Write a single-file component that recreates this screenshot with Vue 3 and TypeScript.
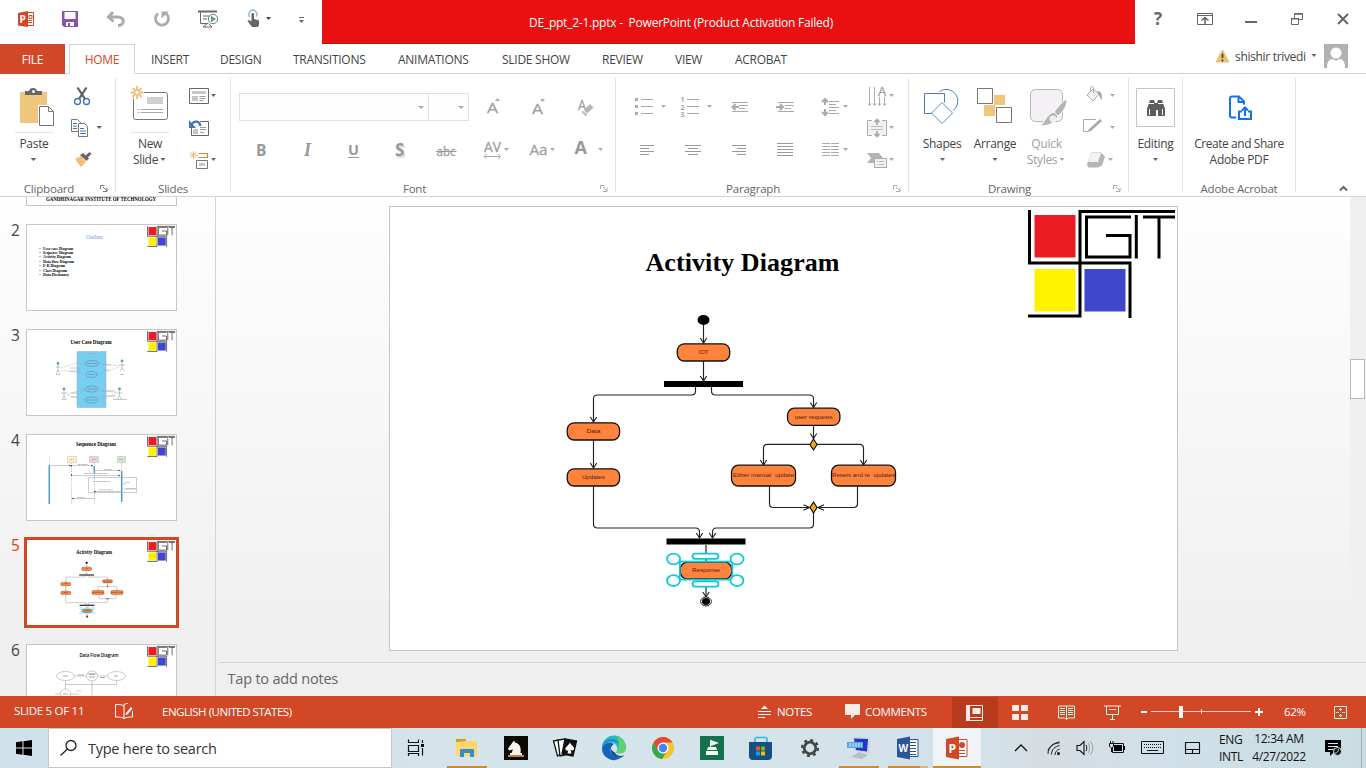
<script setup lang="ts">
import { h, type FunctionalComponent } from 'vue'

// A drawing tile: `b` is the viewBox, and its width and height are also the tile's size.
const Ic: FunctionalComponent<{ b: string }> = (props, { slots }) => {
  const [, , w, ht] = props.b.split(' ')
  return h('svg', { viewBox: props.b, width: w, height: ht, class: 'tile' }, slots.default?.())
}
Ic.props = ['b']

const tabs = [
  { name: 'INSERT', cls: 't-insert' },
  { name: 'DESIGN', cls: 't-design' },
  { name: 'TRANSITIONS', cls: 't-trans' },
  { name: 'ANIMATIONS', cls: 't-anim' },
  { name: 'SLIDE SHOW', cls: 't-show' },
  { name: 'REVIEW', cls: 't-review' },
  { name: 'VIEW', cls: 't-view' },
  { name: 'ACROBAT', cls: 't-acrobat' },
]
const outline = [
  { t: 'User case Diagram', w: 30, y: 250 },
  { t: 'Sequence Diagram', w: 30, y: 254 },
  { t: 'Activity Diagram', w: 28, y: 258 },
  { t: 'Data flow Diagram', w: 31, y: 263 },
  { t: 'E-R Diagram', w: 22, y: 267 },
  { t: 'Class Diagram', w: 24, y: 272 },
  { t: 'Data Dictionary', w: 26, y: 276 },
]
const states = [
  { x: 677.3, y: 343.8, w: 52.4, h: 17.2, t: 'IOT', tw: 10 },
  { x: 787.5, y: 408.2, w: 52.4, h: 17.2, t: 'user requests', tw: 38 },
  { x: 567.2, y: 422.8, w: 52.4, h: 17.2, t: 'Data', tw: 14 },
  { x: 567.2, y: 468.8, w: 52.4, h: 17.2, t: 'Updates', tw: 23 },
  { x: 731.5, y: 465.2, w: 64, h: 20.8, t: 'Either manual  update', tw: 61 },
  { x: 831.5, y: 465.2, w: 64, h: 20.8, t: 'Resets and re  updates', tw: 63 },
  { x: 680.3, y: 562.2, w: 51.4, h: 16.8, t: 'Response', tw: 28 },
]
const arrows = [
  [703.5, 343], [703.5, 381], [593.5, 422], [813.5, 407.5], [593.5, 468], [813.5, 438.5],
  [763.5, 465], [863.5, 465], [699.5, 538], [712.5, 538], [706, 597],
]
</script>

<template>
  <div class="win">
    <header class="titlebar">
      <Ic b="0 0 48 44">
        <path d="M27 12.500h6.500v13H27" fill="#fff" stroke="#d24726" /><path d="M18 13 L28 11 V27 L18 25.500z" fill="#d24726" />
        <path d="M29 15.500h3v3h-3zM28 20.500h4M28 22.500h4" fill="none" stroke="#d24726" /><text x="19.500" y="23" class="pw" font-size="10">P</text>
      </Ic>
      <Ic b="48 0 44 44">
        <path d="M62 11h16v16h-14l-2-2z" fill="#8a52ad" /><path d="M64.500 12h11v7h-11z" fill="#fff" /><path d="M66 22h8v4h-8z" fill="#fff" /><path d="M68 23h2v3h-2z" fill="#8a52ad" />
      </Ic>
      <Ic b="92 0 47 44"><path d="M109 17h9c7 0 7 8.500 0 8.500" fill="none" stroke="#ababab" stroke-width="3" /><path d="M113 12l-4.500 5 5 4.500" fill="none" stroke="#ababab" stroke-width="3" /></Ic>
      <Ic b="139 0 46 44"><path d="M158 13.500a6.500 6.500 0 1 0 8 0" fill="none" stroke="#ababab" stroke-width="2.800" /><path d="M161.500 11.500h7.500l-7.500 7z" fill="#ababab" /></Ic>
      <Ic b="185 0 46 44">
        <path d="M198 11.500h19" stroke="#666" stroke-width="2" /><path d="M200.500 12v11.500h8M203 16h6M203 19h4M207 24l-4 3h9l-3-3" fill="none" stroke="#666" />
        <circle cx="213" cy="19" r="4.700" fill="#fff" stroke="#777" /><path d="M211 15.800l5 3.200-5 3.200z" fill="#4aa57c" />
      </Ic>
      <Ic b="231 0 46 44">
        <path d="M249.800 17a4 4 0 1 1 6.400-.5" fill="none" stroke="#9dbfdf" stroke-width="1.600" />
        <path d="M251.500 14c0-1.500 2.500-1.500 2.500 0v5l5 1.500v4l-1 2.500h-6l-4.500-6c0-1 2-1.500 4 .500z" fill="#666" /><path d="M266 17h5l-2.500 3z" fill="#444" />
      </Ic>
      <Ic b="277 0 45 44"><path d="M299 17.500h5" stroke="#666" /><path d="M299 20h5l-2.500 3z" fill="#666" /></Ic>
      <div class="banner"><span>DE_ppt_2-1.pptx -&nbsp; PowerPoint (Product Activation Failed)</span></div>
      <Ic b="1135 0 47 44"><text x="1154" y="25" font-size="17" font-weight="700" fill="#666" class="ui">?</text></Ic>
      <Ic b="1182 0 46 44"><path d="M1197.500 13.500h15v11h-15zM1198 15.500h14" fill="none" stroke="#666" /><path d="M1205 24v-6M1201.500 20.500l3.500-3 3.500 3" fill="none" stroke="#666" stroke-width="1.600" /></Ic>
      <Ic b="1228 0 46 44"><path d="M1245 22h12" stroke="#666" stroke-width="2" /></Ic>
      <Ic b="1274 0 46 44"><path d="M1291.500 18.500h7v6h-7zM1294.500 18v-4.500h8v6h-3.500" fill="none" stroke="#666" /><path d="M1291 18.700h8M1294 14h9" stroke="#666" stroke-width="1.600" /></Ic>
      <Ic b="1320 0 46 44"><path d="M1338 14l10 10M1348 14l-10 10" stroke="#666" stroke-width="2" /></Ic>
    </header>

    <nav class="tabs">
      <span class="tab file"><b>FILE</b></span>
      <span class="tab home"><b>HOME</b></span>
      <span v-for="t in tabs" :key="t.name" class="tab" :class="t.cls"><b>{{ t.name }}</b></span>
      <div class="user">
        <Ic b="1213 44 20 29"><path d="M1222.500 50l6.500 12h-13z" fill="#ecc071" stroke="#ecc071" stroke-linejoin="round" /><path d="M1222.500 53.500v4.500M1222.500 59.500v2" stroke="#444" stroke-width="1.700" /></Ic>
        <span class="username">shishir trivedi</span>
        <Ic b="1305 44 19 24"><path d="M1311.500 54h5l-2.500 3z" fill="#666" /></Ic>
        <Ic b="1324 44 24 24"><path d="M1324 44h24v24h-24z" fill="#b1b1b1" /><circle cx="1336" cy="53" r="5.500" fill="#fff" /><path d="M1327 68c0-5 1-9 6-9l3 2 3-2c5 0 6 4 6 9z" fill="#fff" /></Ic>
      </div>
    </nav>

    <section class="ribbon">
      <div class="group g-clip">
        <div class="body">
          <div class="big w66">
            <Ic b="0 78 66 58">
              <path d="M20 92h27v31h-27z" fill="#eec77d" /><path d="M25 95v-4h4c0-4 8-4 8 0h5v4z" fill="#666" /><circle cx="33.500" cy="91.500" r="1.500" fill="#fff" />
              <path d="M38 105h12l5 6v16h-17z" fill="#fff" /><path d="M39.500 106.500h9l5 5v14h-14z" fill="#fff" stroke="#777" /><path d="M48.500 106.500v5h5" fill="none" stroke="#777" /><path d="M15 132.500h38" stroke="#e1e1e1" />
            </Ic>
            <span class="paste">Paste</span>
            <Ic b="0 152 66 16"><path d="M30.500 158h6l-3 3z" fill="#666" /></Ic>
          </div>
          <div class="stack">
            <Ic b="66 78 49 32"><path d="M77.500 87.500l7.500 11.500M86.500 87.500l-7.500 11.500" stroke="#5e5e5e" stroke-width="2.200" /><circle cx="77.500" cy="101.500" r="3" fill="none" stroke="#3f74b5" stroke-width="1.300" /><circle cx="86.500" cy="101.500" r="3" fill="none" stroke="#3f74b5" stroke-width="1.300" /></Ic>
            <Ic b="66 110 49 34">
              <path d="M71.500 119.500h6l3 3v9h-9z" fill="#fff" stroke="#777" /><path d="M78.500 123.500h6l3 3v10h-9z" fill="#fff" stroke="#777" /><path d="M73 123.500h4M73 126h4M73 128.500h4M80 128.500h4M80 131h6M80 133.500h6" stroke="#3f74b5" /><path d="M96.500 126h5.500l-2.750 3z" fill="#666" />
            </Ic>
            <Ic b="66 144 49 36"><path d="M75 159l6-3 5 6-5 5z" fill="#eec077" /><path d="M80 155l6.500 6 2.500-2.500-6-5.500z" fill="#666" /><path d="M85.500 157.500l5-4.500" stroke="#666" stroke-width="3" /></Ic>
          </div>
        </div>
        <div class="label"><span>Clipboard</span><Ic b="99 182 16 12"><path d="M100.500 189v-3.500h4M103 187l4 4M107 187.500v4h-4" fill="none" stroke="#777" /></Ic></div>
      </div>

      <div class="group g-slides">
        <div class="body">
          <div class="big w68">
            <Ic b="116 78 68 58">
              <rect x="133.500" y="92.500" width="34" height="27" rx="2" fill="#fff" stroke="#777" /><path d="M147 97h16v7h-16z" fill="#cfcfcf" /><path d="M141 109.500h22M141 112.500h22" stroke="#aaa" /><path d="M138 109.500h1.500M138 112.500h1.500" stroke="#999" />
              <path d="M130 86h14v14h-10z" fill="#fff" /><path d="M137 86v13M130.500 92.500h13M132.500 88l9 9M141.500 88l-9 9" stroke="#ecbf74" stroke-width="1.800" /><circle cx="137" cy="92.500" r="2.200" fill="#fff" stroke="#ecbf74" /><path d="M131 132.500h38" stroke="#e1e1e1" />
            </Ic>
            <span>New</span><span class="row">Slide<Ic b="159 152 9 16"><path d="M161.500 158h5l-2.500 3z" fill="#666" /></Ic></span>
          </div>
          <div class="stack">
            <Ic b="184 78 46 34"><path d="M189.500 88.500h19v15h-19z" fill="#fff" stroke="#666" /><path d="M192 91h14v3h-14zM192 96h6v5h-6z" fill="#c7c7c7" /><path d="M199.500 96.500h6M199.500 98.500h6M199.500 100.500h4" stroke="#999" /><path d="M211 94h5l-2.500 3z" fill="#666" /></Ic>
            <Ic b="184 112 46 32"><path d="M191.500 121.500h17v14h-17z" fill="#fff" stroke="#666" /><path d="M193 129h5v5h-5z" fill="#c7c7c7" /><path d="M200 127.500h6M200 129.500h6M200 132.500h4" stroke="#999" /><path d="M188 119h12v8h-12z" fill="#fff" /><path d="M200.500 126c-1-5-6-6-9-1.500" fill="none" stroke="#3f74b5" stroke-width="2.200" /><path d="M189 120v8h7z" fill="#3f74b5" /></Ic>
            <Ic b="184 144 46 36"><path d="M199 153.500h8.500v4h-9" fill="none" stroke="#d9843d" stroke-width="1.200" /><path d="M196.500 160.500h11v8h-11z" fill="#fff" stroke="#777" /><path d="M199 163h6v3h-6z" fill="#c7c7c7" /><path d="M193.500 151v8M189.500 155h8M190.700 152.200l5.600 5.600M196.300 152.200l-5.600 5.600" stroke="#ecbf74" /><path d="M211 158h5l-2.500 3z" fill="#666" /></Ic>
          </div>
        </div>
        <div class="label"><span>Slides</span></div>
      </div>

      <div class="group g-font">
        <div class="rows">
          <div class="frow top">
            <div class="combo wide"><i class="caret"></i></div><div class="combo"><i class="caret"></i></div>
            <Ic b="469 93 46 28"><text x="487" y="113" class="gl" font-size="15" textLength="11" lengthAdjust="spacingAndGlyphs">A</text><path d="M495 101h5l-2.500-3z" fill="#aaa" /></Ic>
            <Ic b="515 93 46 28"><text x="532" y="114" class="gl" font-size="15" textLength="11" lengthAdjust="spacingAndGlyphs">A</text><path d="M540 99h5l-2.500 3z" fill="#aaa" /></Ic>
            <Ic b="561 93 54 28"><text x="578" y="110" class="gl" font-size="14" textLength="8" lengthAdjust="spacingAndGlyphs">A</text><path d="M584 110l6-6 3.500 3.500-6.500 6z" fill="#b8b5b8" /><path d="M582.500 111.500l4 4" stroke="#b8b5b8" stroke-width="2" /></Ic>
          </div>
          <div class="frow">
            <Ic b="239 132 44 40"><text x="256" y="156" class="gl b" font-size="15.500">B</text></Ic>
            <Ic b="283 132 46 40"><text x="304" y="156" class="gl b serif" font-size="18">I</text></Ic>
            <Ic b="329 132 46 40"><text x="348" y="155" class="gl b" font-size="14.500">U</text><path d="M348 157.500h11" stroke="#999" /></Ic>
            <Ic b="375 132 46 40"><text x="396" y="158" font-size="18" font-weight="700" class="ui" fill="#ddd">S</text><text x="395" y="156" class="gl b" font-size="17">S</text></Ic>
            <Ic b="421 132 46 40"><text x="436.500" y="156" class="gl" font-size="13" textLength="19" lengthAdjust="spacingAndGlyphs">abc</text><path d="M436 151.500h20.500" stroke="#999" /></Ic>
            <Ic b="467 132 48 40"><text x="484" y="152" class="gl" font-size="14" textLength="17" lengthAdjust="spacingAndGlyphs">AV</text><path d="M484 156.500h16M486.500 154l-2.500 2.500 2.500 2.500M498 154l2.500 2.500-2.500 2.500" fill="none" stroke="#aaa" /><path d="M504 148h5l-2.500 3z" fill="#aaa" /></Ic>
            <Ic b="515 132 46 40"><text x="529.500" y="155" class="gl" font-size="14" textLength="18" lengthAdjust="spacingAndGlyphs">Aa</text><path d="M550 148h5l-2.500 3z" fill="#aaa" /></Ic>
            <Ic b="561 132 54 40"><text x="574.500" y="154" class="gl b" font-size="17" textLength="12.500" lengthAdjust="spacingAndGlyphs">A</text><path d="M598 148h5l-2.500 3z" fill="#aaa" /></Ic>
          </div>
        </div>
        <div class="label"><span>Font</span><Ic b="599 182 16 12"><path d="M600.500 189v-3.500h4M603 187l4 4M607 187.500v4h-4" fill="none" stroke="#aaa" /></Ic></div>
      </div>

      <div class="group g-para">
        <div class="body">
          <div class="rows">
            <div class="frow p1">
              <Ic b="630 86 46 42"><path d="M641 99.500h12M641 106.500h12M641 113.500h12" stroke="#aaa" /><path d="M635 99.500h3M635 106.500h3M635 113.500h3" stroke="#aaa" stroke-width="3" /><path d="M661 105h5l-2.500 3z" fill="#aaa" /></Ic>
              <Ic b="676 86 46 42"><path d="M687 99.500h12M687 106.500h12M687 113.500h12" stroke="#aaa" /><text x="680.500" y="102" class="num">1</text><text x="680.500" y="109.500" class="num">2</text><text x="680.500" y="116.500" class="num">3</text><path d="M707 105h5l-2.500 3z" fill="#aaa" /></Ic>
              <Ic b="722 86 46 42"><path d="M732 102.500h16M739 105.500h9M739 108.500h6M732 111.500h16" stroke="#aaa" /><path d="M739 107h-6M735.500 104l-3 3 3 3" fill="none" stroke="#aaa" stroke-width="2" /></Ic>
              <Ic b="768 86 46 42"><path d="M778 102.500h16M785 105.500h9M785 108.500h6M778 111.500h16" stroke="#aaa" /><path d="M776 107h6M780 104l3 3-3 3" fill="none" stroke="#aaa" stroke-width="2" /></Ic>
              <Ic b="814 86 46 42"><path d="M829 101.500h10M829 104.500h7M829 107.500h10M829 110.500h7M829 113.500h10" stroke="#aaa" /><path d="M825 99v6M822 102l3-3 3 3M825 109v6M822 112l3 3 3-3" fill="none" stroke="#aaa" stroke-width="2" /><path d="M843 105h5l-2.500 3z" fill="#aaa" /></Ic>
            </div>
            <div class="frow p2">
              <Ic b="630 132 46 40"><path d="M640 145.500h14M640 148.500h9M640 151.500h14M640 154.500h9" stroke="#999" /></Ic>
              <Ic b="676 132 46 40"><path d="M685 145.500h16M688 148.500h10M685 151.500h16M688 154.500h10" stroke="#999" /></Ic>
              <Ic b="722 132 46 40"><path d="M732 145.500h14M737 148.500h9M732 151.500h14M737 154.500h9" stroke="#999" /></Ic>
              <Ic b="768 132 46 40"><path d="M777 143.500h16M777 146.500h16M777 149.500h16M777 152.500h16M777 155.500h16" stroke="#999" /></Ic>
              <Ic b="814 132 46 40"><path d="M822 143.500h8M822 146.500h8M822 149.500h8M822 152.500h8M822 155.500h8M831 143.500h8M831 146.500h8M831 149.500h8M831 152.500h8M831 155.500h8" stroke="#aaa" /><path d="M843 148h5l-2.500 3z" fill="#aaa" /></Ic>
            </div>
          </div>
          <div class="stack">
            <Ic b="860 78 48 32"><path d="M869.500 87v18M874.500 87v18M879.500 97v8M884.500 97v8M868 103.500l1.500 2 1.500-2M873 103.500l1.500 2 1.500-2M878 103.500l1.500 2 1.500-2M883 103.500l1.500 2 1.500-2" fill="none" stroke="#aaa" /><text x="878" y="96" class="gl" font-size="13">A</text><path d="M889 94h5l-2.500 3z" fill="#aaa" /></Ic>
            <Ic b="860 110 48 34"><path d="M868 121h18v14h-18z" fill="#f5f0f7" /><path d="M872 120.500h-4.500v15h4.500M882 120.500h4.500v15h-4.500" fill="none" stroke="#aaa" /><path d="M871 126.500h12M871 129.500h12" stroke="#bbb" /><path d="M877 120v5M874.500 122l2.500-2.500 2.500 2.500M877 131v5M874.500 134l2.500 2.500 2.500-2.500" fill="none" stroke="#aaa" stroke-width="1.800" /><path d="M889 126h5l-2.500 3z" fill="#aaa" /></Ic>
            <Ic b="860 144 48 36"><path d="M867 153h12l4 5h-9v5h-7l4-5z" fill="#b5b5b5" /><path d="M874.500 158.500h12v9h-12z" fill="#f5f0f7" stroke="#aaa" /><path d="M877 161.500h1M879 161.500h5M877 164.500h1M879 164.500h5" stroke="#bbb" /><path d="M889 158h5l-2.500 3z" fill="#aaa" /></Ic>
          </div>
        </div>
        <div class="label"><span>Paragraph</span><Ic b="892 182 16 12"><path d="M893.500 189v-3.500h4M896 187l4 4M900 187.500v4h-4" fill="none" stroke="#aaa" /></Ic></div>
      </div>

      <div class="group g-draw">
        <div class="body">
          <div class="big w66"><Ic b="909 78 66 58"><path d="M939.500 91.500a11.500 11.500 0 1 1 13.500 19" fill="none" stroke="#4a7fb8" /><path d="M934 113.500h-9.500v-20h20v9" fill="none" stroke="#4a7fb8" /><path d="M942 102.500l10.500 10.500-10.500 10.500-10.500-10.500z" fill="#fff" stroke="#5c8fc5" /></Ic><span>Shapes</span><Ic b="909 152 66 16"><path d="M940 158h5l-2.500 3z" fill="#666" /></Ic></div>
          <div class="big w40"><Ic b="975 78 40 58"><path d="M994 95h11v10h-11zM984 105h11v11h-11z" fill="#eec77d" /><path d="M977.500 88.500h15v15h-15zM996.500 107.500h15v15h-15z" fill="#fff" stroke="#777" /></Ic><span>Arrange</span><Ic b="975 152 40 16"><path d="M992.500 158h5l-2.500 3z" fill="#666" /></Ic></div>
          <div class="big w66 dim"><Ic b="1015 78 66 58"><rect x="1030.500" y="89.500" width="32" height="32" rx="5" fill="#f4f0f6" stroke="#b8b5b8" /><path d="M1067 99c-5 2-9 8-13 13l4 4c5-4 9-9 9-17z" fill="#b5b5b5" stroke="#fff" /><path d="M1054 112l4 4c-3 7-9 10-18 10 5-3 6-12 14-14z" fill="#b5b5b5" stroke="#fff" /><circle cx="1053" cy="119" r="3.500" fill="#eee" /></Ic><span class="quick">Quick</span><span class="row quick">Styles<Ic b="1058 152 9 16"><path d="M1060.500 158h5l-2.500 3z" fill="#aaa" /></Ic></span></div>
          <div class="stack">
            <Ic b="1081 78 47 34"><path d="M1087 95l6-6 6 5-6 7z" fill="#f4f0f6" stroke="#aaa" /><path d="M1090.500 92v-4c0-2 3-2 3 0v5" fill="none" stroke="#aaa" /><path d="M1097 91c5 0 5 3 5 9-3-3-3-5-5-9z" fill="#aaa" /><path d="M1110 94h5l-2.500 3z" fill="#aaa" /></Ic>
            <Ic b="1081 112 47 32"><path d="M1096 119.500h-12.500v12h4" fill="none" stroke="#aaa" /><path d="M1089 129l11-10 2 2-11 10-4 1z" fill="#aaa" /><path d="M1110 126h5l-2.500 3z" fill="#aaa" /></Ic>
            <Ic b="1081 144 47 36"><path d="M1091 152.500h10l4 4-3 9-4 2h-10l-1-3z" fill="#b5b5b5" /><path d="M1091 153h10l-3 9h-10z" fill="#f4f0f6" /><path d="M1108 158h5l-2.500 3z" fill="#aaa" /></Ic>
          </div>
        </div>
        <div class="label"><span>Drawing</span><Ic b="1112 182 16 12"><path d="M1113.500 189v-3.500h4M1116 187l4 4M1120 187.500v4h-4" fill="none" stroke="#aaa" /></Ic></div>
      </div>

      <div class="group g-edit">
        <div class="big"><Ic b="1129 78 53 58"><path d="M1136.500 88.500h38v38h-38z" fill="#fff" stroke="#c6c6c6" /><path d="M1147 116v-7l2-6 1-3h4l1 3h2l1-3h4l1 3 2 6v7h-7v-6h-2v6z" fill="#5e5e5e" /><path d="M1149 103.500h5M1158 103.500h5M1149.500 109v6M1162.500 109v6" stroke="#fff" /></Ic><span>Editing</span><Ic b="1129 152 53 16"><path d="M1153 158h5l-2.500 3z" fill="#666" /></Ic></div>
      </div>
      <div class="group g-adobe">
        <div class="body"><div class="big"><Ic b="1183 78 112 58"><path d="M1236 117.500h-4c-1.500 0-2-.500-2-2v-17c0-1.500.5-2 2-2h7l5 5v3M1238.500 97v5h6" fill="none" stroke="#1473e6" stroke-width="2" /><path d="M1242 111.500h-3v7.500h12v-7.500h-3M1245 116v-8M1242 110.500l3-3 3 3" fill="none" stroke="#1473e6" stroke-width="2" /></Ic><span class="create">Create and Share</span><span>Adobe PDF</span></div></div>
        <div class="label"><span>Adobe Acrobat</span></div>
      </div>
      <Ic b="1296 74 70 122"><path d="M1340 190.500l3.500-3.500 3.500 3.500" fill="none" stroke="#666" stroke-width="2" /></Ic>
    </section>

    <main class="work">
      <aside class="side">
        <div class="slot"><span class="no"></span><div class="thumb"><Ic b="27 120 149 85"><text x="46" y="201.300" class="tt" font-size="5.500" textLength="110" lengthAdjust="spacingAndGlyphs">GANDHINAGAR INSTITUTE OF TECHNOLOGY</text></Ic></div></div>
        <div class="slot"><span class="no">2</span><div class="thumb"><Ic b="27 225 149 85">
          <use href="#git" transform="translate(26.500 225.500) scale(.1893 .192) translate(-390 -207)" />
          <text x="86" y="239" font-size="6" fill="#7ba0dd" class="serif" textLength="17">Outline</text>
          <g v-for="o in outline" :key="o.t"><circle cx="40" :cy="o.y - 1.400" r=".7" fill="#4a86c5" /><text x="43" :y="o.y" class="tt" font-size="3.900" :textLength="o.w" lengthAdjust="spacingAndGlyphs">{{ o.t }}</text></g>
        </Ic></div></div>
        <div class="slot"><span class="no">3</span><div class="thumb"><Ic b="27 330 149 85">
          <use href="#git" transform="translate(26.500 330.500) scale(.1893 .192) translate(-390 -207)" />
          <text x="70.500" y="343.600" class="tt" font-size="5.200" textLength="41" lengthAdjust="spacingAndGlyphs">User Case Diagram</text>
          <path d="M77 351.500h29v56h-29z" fill="#76cef3" stroke="#9ab" stroke-width=".5" />
          <g fill="none" stroke="#678" stroke-width=".5"><ellipse cx="92" cy="363.500" rx="7" ry="3" /><ellipse cx="91.500" cy="374.500" rx="5.500" ry="3" /><ellipse cx="91.500" cy="389" rx="6.500" ry="3" /><ellipse cx="91.500" cy="400" rx="6.500" ry="3" /><path d="M87 363.500h10M88 374.500h7M87 389h9M87 400h9" /><path d="M61 368l16-5h8M61 370l25 4M98 363l21 3M97 375l22-8M67 394l18-5M67 395l18 5M98 389l19 4M98 400l18-6" stroke="#aaa" stroke-dasharray="2 .7" /></g>
          <g stroke="#aaa" stroke-width=".7" fill="none"><path d="M58 365v5l-2 4M58 370l2 4M56 367h4M122 363v5l-2 3M122 368l2 3M119 365h6M64 391v5l-2 3M64 396l2 3M61 393h6M119.500 391v5l-2 3M119.500 396l2 3M117 393h5M87 353.500h8M56 374.500h4M120 374.500h4M62 399.500h4M113 399.500h14M70 368h10M70 371h11M103 365h8M104 370h5M101 391h14M101 396h14M71 393h6M71 397h6" /></g>
          <g fill="#4aa5c9"><circle cx="58" cy="363.500" r="1.400" /><circle cx="122" cy="361" r="1.400" /><circle cx="64" cy="389" r="1.400" /><circle cx="119.500" cy="389" r="1.400" /></g>
        </Ic></div></div>
        <div class="slot"><span class="no">4</span><div class="thumb"><Ic b="27 435 149 85">
          <use href="#git" transform="translate(26.500 435.500) scale(.1893 .192) translate(-390 -207)" />
          <text x="76" y="446.300" class="tt" font-size="5.200" textLength="40" lengthAdjust="spacingAndGlyphs">Sequence Diagram</text>
          <path d="M67.500 456.500h9v6h-9z" fill="#fff0c8" stroke="#bbb" stroke-width=".5" /><path d="M89.500 456.500h9v6h-9z" fill="#ead0e3" stroke="#bbb" stroke-width=".5" /><path d="M117.500 456.500h8v6h-8z" fill="#d0e7cf" stroke="#bbb" stroke-width=".5" />
          <path d="M71.500 463v41M94.500 463v41M121.500 463v41M49.500 457v10" stroke="#aaa" stroke-width=".6" stroke-dasharray="1.500 1" /><path d="M49.300 465.500V504M121.700 471v31M94.300 466v7" stroke="#519ac2" stroke-width="1.500" />
          <path d="M50 465.500h43M95 470.500h26M72 475.500h48M88.500 477.500h48v15h-48zM94 491.500h27M72 498.500h23M122 484h4M123 489h13" fill="none" stroke="#aaa" stroke-width=".6" />
          <path d="M69.500 464.500l1.500 1-1.500 1M91.500 464.500l1.500 1-1.500 1M118.500 469.500l1.500 1-1.500 1M118.500 474.500l1.500 1-1.500 1M95.500 490.500l-1.500 1 1.500 1M73.500 497.500l-1.500 1 1.500 1" fill="#222" /><path d="M78 464.500h10M84 473.500h24M93 481.500h17M99 489.800h14M77 497.500h8M104 469.500h8M126 488.500h10M125 482.500h5M70 459.500h4M92 459.500h4M119 459.500h4" stroke="#aaa" stroke-width=".8" stroke-dasharray="2 .5" /><path d="M71.500 465v2M71.500 474v2" stroke="#2a80a8" />
        </Ic></div></div>
        <div class="slot"><span class="no sel">5</span><div class="thumb sel"><Ic b="27 540 149 85">
          <use href="#git" transform="translate(26.500 540.500) scale(.1893 .192) translate(-390 -207)" />
          <text x="76" y="553.600" class="tt" font-size="5.200" textLength="36" lengthAdjust="spacingAndGlyphs">Activity Diagram</text>
          <use href="#flow" transform="translate(27.300 541) scale(.1893 .192) translate(-390 -207)" />
        </Ic></div></div>
        <div class="slot"><span class="no">6</span><div class="thumb"><Ic b="27 645 149 85">
          <use href="#git" transform="translate(26.500 645.500) scale(.1893 .192) translate(-390 -207)" />
          <text x="79.500" y="657.300" class="tt sans" font-size="5" textLength="39" lengthAdjust="spacingAndGlyphs">Data Flow Diagram</text>
          <g fill="none" stroke="#aaa" stroke-width=".6"><ellipse cx="65.500" cy="676" rx="9" ry="4.500" /><ellipse cx="92" cy="676" rx="5.500" ry="5" /><ellipse cx="116.500" cy="676" rx="9" ry="4.500" /><ellipse cx="65.500" cy="694" rx="5" ry="5" /><path d="M75 676h12M98 676h9M65.500 681v8M65.500 684.500h51v-4M92 681v16M87 673.500h10M55 694h6M70 694h9M76 691h5" /><path d="M63 676h5M89 674.500h6M89 677h6M114 676h4M63 694h5M78 675h6M100 677.500h5" stroke-width="1" /></g>
        </Ic></div></div>
      </aside>

      <section class="right">
        <div class="stage">
          <div class="slide">
            <Ic b="390 207 787 443">
              <defs>
                <g id="git">
                  <path d="M1034.500 215h41v42.500h-41z" fill="#ed1c24" /><path d="M1034.500 269h41v42.500h-41z" fill="#fff200" /><path d="M1084.500 269h41v42.500h-41z" fill="#3f48cc" />
                  <path d="M1029.500 210v53h100.500v55M1028 316h52V211.500h95M1131 217h-44.500v40H1130v-21.500h-24M1136.300 215v43.500M1143 217h32M1159 217v41.500" fill="none" stroke="#000" stroke-width="3" />
                </g>
                <g id="flow">
                  <g fill="none" stroke="#222" stroke-width="1.150">
                    <path d="M703.500 325v18M703.500 361v20M695.500 387v4q0 4-4 4h-94q-4 0-4 4v23M711.500 387v4q0 4 4 4h94q4 0 4 4v9M593.500 440v28M813.500 425v14M810 444.300h-42.500q-4 0-4 4v17M817 444.300h42.500q4 0 4 4v17M769.500 486v17.500q0 4 4 4h36.500M857.500 486v17.500q0 4-4 4h-36.500M593.500 486v38q0 4 4 4h98q4 0 4 4v6M813.500 512v12q0 4-4 4h-93q-4 0-4 4v6M706 545v17M706 579v18" />
                    <path v-for="(a, i) in arrows" :key="i" :d="`M${a[0] - 3.2} ${a[1] - 5}L${a[0]} ${a[1]}L${a[0] + 3.2} ${a[1] - 5}`" />
                    <path d="M803.500 504.700l6 2.800-6 2.800M824 504.700l-6 2.800 6 2.800" />
                  </g>
                  <ellipse cx="703.500" cy="320" rx="6" ry="5" /><path d="M664 381h79v6h-79zM666.500 538.500h79v6h-79z" />
                  <g v-for="s in states" :key="s.t">
                    <rect :x="s.x" :y="s.y" :width="s.w" :height="s.h" rx="7" fill="#ff823d" stroke="#111" stroke-width="1.300" />
                    <text :x="s.x + s.w / 2 - s.tw / 2" :y="s.y + s.h / 2 + 1.800" :textLength="s.tw" lengthAdjust="spacingAndGlyphs" class="node">{{ s.t }}</text>
                  </g>
                  <path d="M813.500 439l3.500 5.500-3.500 5.500-3.500-5.500zM813.500 502l3.500 5.500-3.500 5.500-3.500-5.500z" fill="#fda50f" stroke="#111" stroke-width="1.200" />
                  <g stroke="#0bcbd6" stroke-width="1.800" fill="#fff">
                    <rect x="679.800" y="561.600" width="52.500" height="18" fill="none" />
                    <rect x="692.500" y="553.700" width="26" height="5.200" rx="2.600" /><rect x="692.500" y="581.400" width="26" height="5.200" rx="2.600" />
                    <ellipse cx="673.500" cy="559" rx="6.500" ry="5.400" /><ellipse cx="737" cy="559" rx="6.500" ry="5.400" /><ellipse cx="673.500" cy="580.600" rx="6.500" ry="5.400" /><ellipse cx="737" cy="580.600" rx="6.500" ry="5.400" />
                  </g>
                  <ellipse cx="706" cy="601.500" rx="5.400" ry="4.500" fill="#fff" stroke="#222" /><ellipse cx="706" cy="601.500" rx="4" ry="3.400" />
                </g>
              </defs>
              <use href="#git" /><use href="#flow" />
              <text x="645.500" y="270.500" class="tt" font-size="26" textLength="194">Activity Diagram</text>
            </Ic>
          </div>
          <div class="scroll"><div class="grip"></div></div>
        </div>
        <div class="notes"><span>Tap to add notes</span></div>
      </section>
    </main>

    <footer class="status">
      <span class="s1">SLIDE 5 OF 11</span>
      <Ic b="108 696 54 32"><path d="M124 706c-2-1.500-5-1.500-8.500-1.500v12.500c3.500 0 6.500 0 8.500 1.500v-14c1-.5 2-1 4-1M132.500 711v6c-3 0-6 0-8.500 1.500" fill="none" stroke="#fff" /><path d="M126 713l5-6 1.500 1.500-5 6-2 .5z" fill="#fff" /></Ic>
      <span class="s2">ENGLISH (UNITED STATES)</span>
      <Ic b="750 696 27 32"><path d="M758 711.500h13M758 714.500h13M758 717.500h7" stroke="#fff" /><path d="M761 709h7l-3.500-3.500z" fill="#fff" /></Ic>
      <span class="s3">NOTES</span>
      <Ic b="830 696 35 32"><path d="M845 704h15v11h-5l-4 4v-4h-6z" fill="#fbeae5" /></Ic>
      <span class="s4">COMMENTS</span>
      <Ic b="952 696 46 32"><path d="M952 697h46v31h-46z" fill="#b83b1d" /><path d="M966.500 705.500h16v15h-16z" fill="none" stroke="#fbeae5" /><path d="M966 705h4v16h-4zM972.500 708h8v6h-8zM970 717h12v1h-12z" fill="#fbeae5" /></Ic>
      <Ic b="998 696 46 32"><path d="M1012 705h7v6h-7zM1021 705h7v6h-7zM1012 714h7v6h-7zM1021 714h7v6h-7z" fill="#fbeae5" /></Ic>
      <Ic b="1044 696 46 32"><path d="M1066.500 719v-13h-8v12h6l2 1.500 2-1.500h6v-12h-8" fill="none" stroke="#fbeae5" /><path d="M1060 708.500h5M1060 710.500h5M1060 712.500h5M1060 714.500h5M1068 708.500h5M1068 710.500h5M1068 712.500h5M1068 714.500h5" stroke="#fbeae5" /></Ic>
      <Ic b="1090 696 50 32"><path d="M1104 706h17M1106.500 706v8.500h12v-8.500M1109 709.500h7M1112.500 715v4M1110 719.500h5" fill="none" stroke="#fbeae5" /></Ic>
      <Ic b="1140 696 132 32"><path d="M1141 712h6M1255 712h8M1259 708v8" stroke="#fff" stroke-width="2" /><path d="M1151 711.500h100M1201.500 709v5" stroke="#f6cfc4" /><path d="M1179 706h4v12h-4z" fill="#fff" /></Ic>
      <span class="s5">62%</span>
      <Ic b="1320 696 46 32"><path d="M1334.500 706.500h12v12h-12z" fill="none" stroke="#fbeae5" /><path d="M1340.500 708v3M1340.500 714v3M1336 712.500h3M1342 712.500h3M1339 709.500h3M1339 715.500h3" stroke="#fbeae5" stroke-dasharray="1.500 .5" /></Ic>
    </footer>

    <footer class="taskbar">
      <Ic b="0 728 48 40"><path d="M16 742.300l6.500-1v6.200H16zM23.500 741.200l8.500-1.200v7.500h-8.500zM16 748.500h6.500v6.200l-6.500-1zM23.500 748.500H32v7.500l-8.500-1.200z" /></Ic>
      <div class="search"><Ic b="48 728 40 40"><circle cx="71" cy="745.500" r="5" fill="none" stroke="#222" stroke-width="1.300" /><path d="M67.500 749l-7 6.500" stroke="#222" stroke-width="1.300" /></Ic><span>Type here to search</span></div>
      <Ic b="392 728 50 40"><path d="M408.500 739.500v3h10v-3M408.500 745.500h10v6h-10zM408.500 756v-2.500h10v2.500M422.500 740v3M422.500 748v7.500" fill="none" stroke="#111" stroke-width="1.200" /><path d="M421 744h3v3h-3z" /></Ic>
      <Ic b="442 728 49 40"><path d="M456 739h10v4h-10z" fill="#d79b20" /><path d="M456 742l10-1h11v15h-21z" fill="#ffd66b" /><path d="M460 757v-7c0-1 1-1 2-1h10c1 0 2 0 2 1v7h-4v-4h-6v4z" fill="#338bd0" /><path d="M447 766h40v2h-40z" fill="#ce8a2d" /></Ic>
      <Ic b="491 728 49 40"><path d="M504 736h24v24h-24z" fill="#0c0906" /><path d="M508 757h16v-2h-16z" fill="#b38652" /><path d="M510 755v-2h12v2zM511.500 753h9c1-5-1-10-5.500-10.500l-1-2-1.500 2-4.500 6 1 2 4-1z" fill="#f8f3ea" /></Ic>
      <Ic b="540 728 49 40"><g fill="#fff" stroke="#111" stroke-width="1.300"><path d="M553.500 741l5-1 2 14-3 2z" /><path d="M558 740l7-1v16l-5 1z" /><path d="M565 739l11.500 2-3.500 15-11-2z" fill="#111" /></g><path d="M570 742.500c-2 4-5 4-4.500 7 1 2 3 1 3 0l-1 4h4l-1-3.500c2 1 4 0 3.500-2-.5-2-3-3-4-5.500z" fill="#fff" /></Ic>
      <Ic b="589 728 49 40">
        <path d="M602 748a12 12 0 0 0 20 9c-8 2-13-4-11-9 1-3 3-4 3-4-5-4-11-1-12 4z" fill="#1264b7" /><path d="M602 747a12 12 0 0 1 24 1c0 5-6 6.500-10 4.500 3-3 1-9-4-10-4-.5-8 1.500-10 4.500z" fill="#2bb9c0" /><path d="M617 736.500a12 12 0 0 1 9 11.500c0 5-6 6.500-10 4.500 4-4 4-10 1-16z" fill="#5fd46a" /><path d="M602 747c1-8 12-12 17-4-6-2-13-3-17 4z" fill="#1b8bdc" /><path d="M611 749c-1 5 3 9 8 8.500 2 0 4-.5 5-2-4 1-8 0-9-3-2-1-3-2-4-3.500z" fill="#1a4d96" />
      </Ic>
      <Ic b="638 728 49 40"><circle cx="663" cy="748" r="11" fill="#fbc22b" /><path d="M653.500 742.500a11 11 0 0 1 19 0H663l-5 9z" fill="#e3483d" /><path d="M653.500 742.500a11 11 0 0 0 8.500 16.500l5-8-9 0z" fill="#35a853" /><circle cx="663" cy="748" r="5.500" fill="#fff" /><circle cx="663" cy="748" r="4.200" fill="#4285f4" /></Ic>
      <Ic b="687 728 49 40"><path d="M700 736h24v24h-24z" fill="#15704d" /><path d="M706 751h12v4h-12zM711 740v10h-1v-10zM711 740l8 3-8 3zM708 747h8l1 3h-10z" fill="#eefaf3" /></Ic>
      <Ic b="736 728 49 40"><path d="M755 742v-3c0-1 .5-1.500 1.500-1.500h9c1 0 1.500.500 1.500 1.500v3" fill="none" stroke="#35b7e7" stroke-width="1.700" /><path d="M749 742h23v14q0 4-4 4h-15q-4 0-4-4z" fill="#164f87" /><path d="M756 746.500h4v4h-4z" fill="#f25022" /><path d="M761 746.500h4v4h-4z" fill="#7fba00" /><path d="M756 751.500h4v4h-4z" fill="#00a4ef" /><path d="M761 751.500h4v4h-4z" fill="#ffb900" /></Ic>
      <Ic b="785 728 49 40"><circle cx="810" cy="748" r="5.800" fill="none" stroke="#444" stroke-width="2.800" /><circle cx="810" cy="748" r="8" fill="none" stroke="#444" stroke-width="2.200" stroke-dasharray="3 3.280" /></Ic>
      <Ic b="834 728 49 40"><path d="M852 737l18 .5-1 16-14-2z" fill="#cfd5df" /><path d="M854 738.500l14 .5-1 12.500-11-1.500z" fill="#1e39c8" /><path d="M847 742h16v6h-16z" fill="#57a5df" /><path d="M849 744h13M849 746h13" stroke="#eaf5fd" stroke-dasharray="2 1" /><path d="M851 757l8-5 9 3-6 4z" fill="#b9bec4" /><path d="M839 766h40v2h-40z" fill="#ce8a2d" /></Ic>
      <Ic b="883 728 50 40"><path d="M907 739.500h11v17h-11z" fill="#fff" stroke="#2b579a" /><path d="M910 742.500h6M910 745.500h6M910 748.500h6M910 751.500h6M910 754.500h6" stroke="#2b579a" /><path d="M897 739l13-2.500v23L897 757z" fill="#2b579a" /><text x="898.500" y="752" class="pw" font-size="10">W</text><path d="M888 766h32v2h-32z" fill="#ce8a2d" /><path d="M920 766h8v2h-8z" fill="#deb47e" /></Ic>
      <Ic b="933 728 48 40"><path d="M933 728h48v40h-48z" fill="#f0f4f7" /><path d="M958 739.500h9v17h-9z" fill="#fff" stroke="#d24726" /><circle cx="962" cy="745" r="3" fill="#d24726" /><path d="M959 750.500h6M959 753.500h6" stroke="#d24726" /><path d="M946 739l13-2.500v23L946 757z" fill="#d24726" /><text x="948.500" y="752.500" class="pw" font-size="12">P</text><path d="M933 766h48v2h-48z" fill="#ce8a2d" /></Ic>
      <div class="tray">
        <Ic b="1005 728 32 40"><path d="M1015 751l6-6 6 6" fill="none" stroke="#111" stroke-width="1.300" /></Ic>
        <Ic b="1037 728 32 40"><path d="M1048 754c0-6 5-11 11.500-12M1051.500 754.500c0-5 3.500-8 8-9M1055 755c0-3 2-5 4.500-6M1048 751c1-5 6-8 11.500-8" fill="none" stroke="#222" /><circle cx="1058.500" cy="753.500" r="1.500" /></Ic>
        <Ic b="1069 728 32 40"><path d="M1077 745.500h3l4-4v13l-4-4h-3z" fill="none" stroke="#111" stroke-width="1.100" /><path d="M1086 745c1 2 1 4 0 6" fill="none" stroke="#111" /><path d="M1088 743c2 3 2 7 0 10M1090.500 741.500c3 4 3 9 0 13" fill="none" stroke="#999" /></Ic>
        <Ic b="1101 728 33 40"><path d="M1112.500 743.500h11v9h-11z" fill="none" stroke="#111" /><path d="M1114 745h8v6h-8zM1123 746h2v4h-2z" /><path d="M1109.500 743.500h4v3l-2 1.500-2-1.500z" fill="#d3e2ea" stroke="#111" /><path d="M1110.500 743v-2M1113 743v-2M1111.500 748v4" stroke="#111" /></Ic>
        <Ic b="1134 728 38 40"><path d="M1141.500 741.500h22v12h-22z" fill="none" stroke="#111" /><path d="M1144 744.500h17M1144 747.500h17" stroke="#111" stroke-dasharray="1 1" /><path d="M1147 750.500h11" stroke="#111" /></Ic>
        <Ic b="1172 728 38 40"><path d="M1185.500 742.500h14v11h-14zM1186 749.500h13M1192.500 750v3" fill="none" stroke="#111" stroke-width="1.100" /></Ic>
        <div class="lang"><span>ENG</span><span>INTL</span></div>
        <div class="clock"><span>12:34 AM</span><span>4/27/2022</span></div>
        <Ic b="1311 728 55 40"><path d="M1325 740h16v12h-7l-4 4v-4h-5z" /><path d="M1328 743.500h10M1328 746.500h10M1328 749.500h6" stroke="#dce7ec" /><circle cx="1337.500" cy="751.500" r="4" fill="#111" stroke="#d7e3ea" /><path d="M1335 753c2 0 4-2 3-4" stroke="#d7e3ea" fill="none" /><path d="M1361.500 728v40" stroke="#9fb0b8" /></Ic>
      </div>
    </footer>
  </div>
</template>

<style>
body { margin: 0; overflow: hidden; }
.tile { display: block; flex: none; }
</style>
<style scoped>
.win { width: 1366px; height: 768px; display: flex; flex-direction: column; background: #fff; overflow: hidden; font-family: "Open Sans", "Noto Sans", sans-serif; font-size: 12px; color: #444; letter-spacing: -.25px; white-space: nowrap; }
svg text { letter-spacing: 0; white-space: pre; }
.titlebar { display: flex; height: 44px; flex: none; }
.banner { width: 813px; height: 43px; background: #e81010; border-bottom: 1px solid #c40d0d; color: #fff; text-align: center; line-height: 46px; }
.banner span { margin-right: 95px; letter-spacing: -.23px; }
.tabs { display: flex; height: 30px; flex: none; box-sizing: border-box; border-bottom: 1px solid #d4d4d4; }
.tab { height: 29px; line-height: 31px; flex: none; letter-spacing: -.27px; }
.tab b { font-weight: 400; }
.file { width: 65px; background: #d24726; color: #fff; text-align: center; height: 30px; }
.home { width: 64px; margin-left: 4px; border: 1px solid #d4d4d4; border-bottom: 0; background: #fff; color: #d24726; text-align: center; line-height: 29px; height: 29px; }
.t-insert { margin-left: 16px; width: 69px; }
.t-design { width: 73px; }
.t-trans { width: 105px; }
.t-anim { width: 104px; }
.t-show { width: 100px; }
.t-review { width: 73px; }
.t-view { width: 60px; }
.t-acrobat { width: 60px; }
.user { display: flex; margin-left: auto; margin-right: 18px; }
.username { width: 70px; line-height: 25px; margin-left: 2px; letter-spacing: -.32px; }
.ribbon { display: flex; height: 122px; flex: none; border-bottom: 1px solid #d4d4d4; }
.group { box-sizing: border-box; height: 114px; margin-top: 4px; border-right: 1px solid #e1e1e1; flex: none; display: flex; flex-direction: column; }
.g-clip { width: 116px; }
.g-slides { width: 115px; }
.g-font { width: 385px; }
.g-para { width: 293px; }
.g-draw { width: 220px; }
.g-edit { width: 54px; }
.g-adobe { width: 113px; }
.body { display: flex; height: 102px; }
.big { display: flex; flex-direction: column; align-items: center; line-height: 16px; letter-spacing: -.3px; }
.big > span { height: 16px; }
.paste { margin-left: 2px; }
.create { letter-spacing: -.45px; }
.quick { margin-right: 3px; }
.w66 { width: 66px; }
.w68 { width: 68px; }
.w40 { width: 40px; }
.dim { color: #a0a0a0; }
.row { display: flex; }
.stack { display: flex; flex-direction: column; }
.label { height: 12px; line-height: 17px; display: flex; color: #666; position: relative; justify-content: center; font-size: 11.500px; letter-spacing: -.2px; }
.label svg { position: absolute; right: 0; top: 2px; }
.g-clip .label span { margin-right: 17px; }
.g-font .label span { margin-right: 17px; }
.g-para .label span { margin-right: 18px; }
.g-draw .label span { margin-right: 18px; }
.rows { height: 102px; display: flex; flex-direction: column; }
.frow { display: flex; margin-left: 8px; }
.frow.top { margin-top: 15px; height: 39px; }
.frow.p1 { margin: 8px 0 0 14px; height: 46px; }
.frow.p2 { margin-left: 14px; }
.combo { box-sizing: border-box; width: 40px; height: 28px; border: 1px solid #e1e1e1; background: #fdfdfd; display: flex; align-items: center; justify-content: flex-end; padding-right: 4px; border-left: 0; }
.combo.wide { width: 190px; border-left: 1px solid #e1e1e1; }
.caret { width: 0; border: 3px solid transparent; border-top-color: #aaa; border-bottom: 0; }
.gl { fill: #a0a0a0; font-weight: 400; stroke: #a0a0a0; stroke-width: .3px; }
.gl.b { font-weight: 700; fill: #999; stroke: none; }
.gl.serif { font-family: "Liberation Serif", serif; font-style: italic; }
.serif { font-family: "Liberation Serif", serif; }
.num { font-size: 7px; font-weight: 700; fill: #aaa; }
.pw { fill: #fff; font-weight: 700; }
.tt { font-family: "Liberation Serif", serif; font-weight: 700; fill: #000; }
.tt.sans { font-family: "Open Sans", sans-serif; font-weight: 600; }
.node { font-family: "Liberation Sans", sans-serif; font-size: 6px; fill: #4d2814; }
.work { height: 499px; flex: none; display: flex; background: linear-gradient(#fefefe, #efefef 92%); overflow: hidden; }
.side { width: 215px; height: 499px; overflow: hidden; flex: none; border-right: 1px solid #d4d4d4; box-sizing: content-box; }
.slot { display: flex; height: 87px; margin-bottom: 18px; }
.slot:first-child { margin-top: -78px; }
.no { width: 15px; margin-left: 11px; font-size: 15.500px; line-height: 12px; letter-spacing: 0; }
.no.sel { color: #d24726; }
.thumb { border: 1px solid #c6c6c6; background: #fff; width: 149px; height: 85px; }
.thumb.sel { border-color: #d24726; box-shadow: 0 0 0 2px #d24726; }
.right { flex: 1; display: flex; flex-direction: column; }
.stage { height: 465px; display: flex; border-bottom: 1px solid #d4d4d4; margin-left: 3px; }
.slide { margin: 9px 0 0 170px; width: 787px; height: 443px; border: 1px solid #c6c6c6; background: #fff; }
.scroll { margin-left: auto; width: 16px; height: 445px; background: #f0f0f0; }
.grip { box-sizing: border-box; width: 15px; height: 40px; margin-top: 162px; background: #fff; border: 1px solid #bbb; }
.notes { height: 33px; line-height: 32px; font-size: 14.500px; padding-left: 11.500px; color: #666; letter-spacing: -.2px; }
.status { height: 32px; flex: none; display: flex; background: #d24726; color: #fff; line-height: 32px; font-size: 11.500px; letter-spacing: -.35px; }
.s1 { width: 94px; padding-left: 14px; line-height: 30px; letter-spacing: -.28px; }
.s2 { width: 588px; letter-spacing: -.47px; }
.s3 { width: 53px; }
.s4 { width: 87px; }
.s5 { width: 36px; padding-left: 12px; }
.taskbar { height: 40px; flex: none; display: flex; background: linear-gradient(90deg, #cfe1ea, #d6e4eb 40%, #d3e2ea 72%, #d7dce2 76%, #d0e0e8 85%, #cadde3); }
.search { box-sizing: border-box; width: 344px; height: 40px; background: #fff; border: 1px solid #c5c8ca; display: flex; font-size: 14.500px; line-height: 40px; color: #333; letter-spacing: -.25px; }
.search svg { margin: -1px 0 0 -1px; }
.tray { display: flex; margin-left: 24px; color: #111; }
.lang, .clock { display: flex; flex-direction: column; line-height: 17px; padding-top: 3px; letter-spacing: -.35px; }
.lang { width: 37px; padding-left: 9px; box-sizing: border-box; }
.clock { width: 64px; align-items: center; padding-right: 0; box-sizing: border-box; padding-top: 2px; line-height: 18px; letter-spacing: -.35px; }
</style>
